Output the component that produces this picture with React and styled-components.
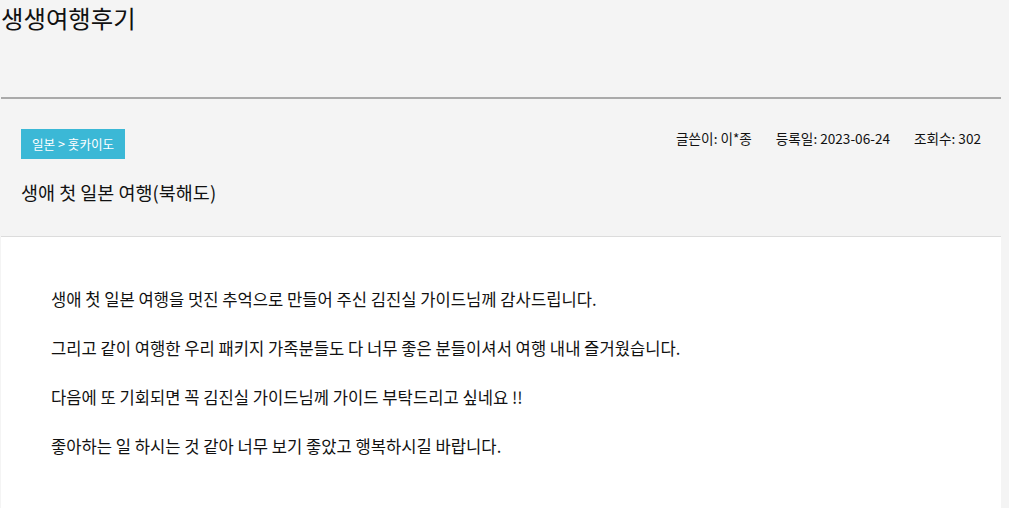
import React from "react"
import styled, { createGlobalStyle } from "styled-components"

const bg = "#f4f4f4"
const ink = "#222"
const accent = "#3bb8d6"
const font = `"Noto Sans CJK KR", "Noto Sans", sans-serif`

const Global = createGlobalStyle`
  html, body { background: ${bg}; margin: 0; }
  * { box-sizing: border-box; }
  body { font-family: ${font}; color: ${ink}; }
`

const Page = styled.div`
  width: 1001px;
  padding-left: 1px;
`

const Header = styled.header`
  height: 99px;
  border-bottom: 2px solid #aaa;
`

const PageTitle = styled.h1`
  margin: 0;
  font-size: 24.4px;
  font-weight: 400;
  line-height: 36px;
  color: #111;
`

const Info = styled.section`
  padding: 30px 20px 31px 20px;
  border-bottom: 1px solid #dcdcdc;
`

const InfoTop = styled.div`
  display: flex;
  justify-content: space-between;
  align-items: flex-start;
`

const Badge = styled.span`
  display: inline-block;
  height: 30px;
  line-height: 30px;
  padding: 0 11px;
  background: ${accent};
  color: #fff;
  font-size: 12.6px;
`

const Meta = styled.ul`
  list-style: none;
  margin: 0;
  padding: 0;
  display: flex;
  gap: 24px;
  font-size: 13.6px;
  line-height: 18px;
  color: #111;
`

const Subject = styled.h2`
  margin: 20px 0 0;
  font-size: 18.5px;
  font-weight: 400;
  line-height: 26px;
  color: #111;
`

const Body = styled.article`
  background: #fff;
  min-height: 271px;
  padding: 50px 50px 30px;
`

const Para = styled.p`
  margin: 0 0 25px;
  font-size: 16.6px;
  line-height: 24px;
  color: #111;
`

const META = [
  ["글쓴이", "이*종"],
  ["등록일", "2023-06-24"],
  ["조회수", "302"],
]

const LINES = [
  "생애 첫 일본 여행을 멋진 추억으로 만들어 주신 김진실 가이드님께 감사드립니다.",
  "그리고 같이 여행한 우리 패키지 가족분들도 다 너무 좋은 분들이셔서 여행 내내 즐거웠습니다.",
  "다음에 또 기회되면 꼭 김진실 가이드님께 가이드 부탁드리고 싶네요 !!",
  "좋아하는 일 하시는 것 같아 너무 보기 좋았고 행복하시길 바랍니다.",
]

export default function App() {
  return (
    <>
      <Global />
      <Page>
        <Header>
          <PageTitle>생생여행후기</PageTitle>
        </Header>

        <Info>
          <InfoTop>
            <Badge>일본 &gt; 홋카이도</Badge>
            <Meta>
              {META.map(([k, v]) => (
                <li key={k}>{k}: {v}</li>
              ))}
            </Meta>
          </InfoTop>
          <Subject>생애 첫 일본 여행(북해도)</Subject>
        </Info>

        <Body>
          {LINES.map(l => (
            <Para key={l}>{l}</Para>
          ))}
        </Body>
      </Page>
    </>
  )
}
